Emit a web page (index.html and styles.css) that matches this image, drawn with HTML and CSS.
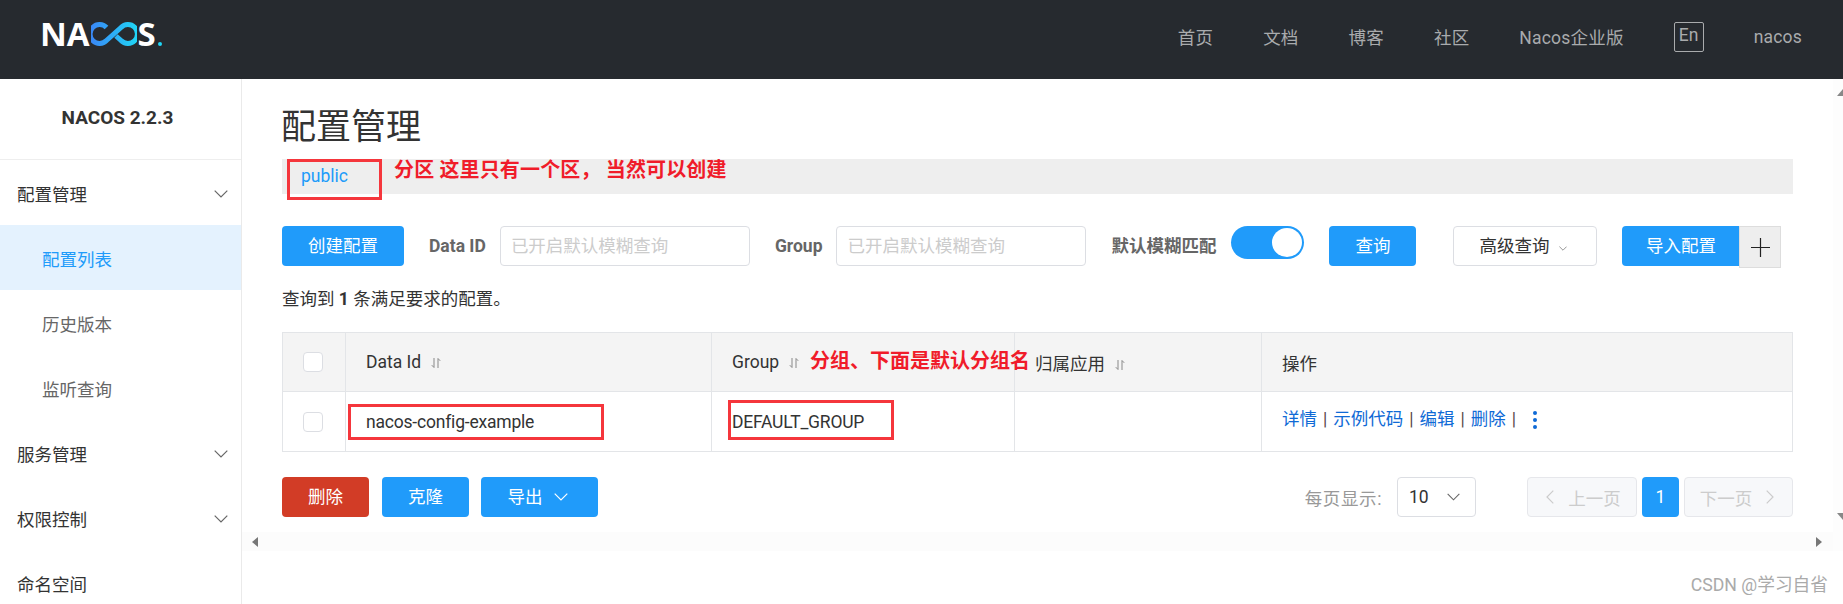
FILE: index.html
```html
<!DOCTYPE html>
<html lang="zh-CN">
<head>
    <meta charset="UTF-8">
    <meta name="viewport" content="width=device-width, initial-scale=1.0">
    <title>Nacos</title>
    <link rel="stylesheet" href="styles.css">
</head>
<body>
    <svg class="defs" width="0" height="0">
        <defs>
            <linearGradient id="loopGrad" x1="0" y1="0" x2="1" y2="0">
                <stop offset="0" stop-color="#3a86f6"/>
                <stop offset="1" stop-color="#1fd6f6"/>
            </linearGradient>
            <symbol id="sort" viewBox="0 0 10 10">
                <path d="M3 0V9.5M0.8 7.2L3 9.5M7 10V0.5M7 0.5L9.2 2.8" fill="none" stroke="currentColor" stroke-width="1"/>
            </symbol>
            <symbol id="chev" viewBox="0 0 14 8">
                <path d="M0.7 0.7L7 7L13.3 0.7" fill="none" stroke="currentColor" stroke-width="1.2"/>
            </symbol>
        </defs>
    </svg>

    <header class="topbar">
        <div class="logo">
            <span class="logo-text">NA</span>
            <svg class="logo-loop" width="46" height="24" viewBox="0 0 46 24">
                <path d="M15.5 5.5A9.5 9.5 0 1 0 15.5 18.5L30 5.5A9.5 9.5 0 1 1 30 18.5L25 14" fill="none" stroke="url(#loopGrad)" stroke-width="5"/>
            </svg>
            <span class="logo-text">S</span><span class="logo-dot"></span>
        </div>
        <nav class="topnav">
            <a>首页</a>
            <a>文档</a>
            <a>博客</a>
            <a>社区</a>
            <a>Nacos企业版</a>
            <a class="lang">En</a>
            <a>nacos</a>
        </nav>
    </header>

    <div class="main">
        <aside class="sidebar">
            <div class="version">NACOS 2.2.3</div>
            <ul class="menu">
                <li class="menu-item">配置管理<svg class="chev-side"><use href="#chev"/></svg></li>
                <li class="menu-sub active">配置列表</li>
                <li class="menu-sub">历史版本</li>
                <li class="menu-sub">监听查询</li>
                <li class="menu-item">服务管理<svg class="chev-side"><use href="#chev"/></svg></li>
                <li class="menu-item">权限控制<svg class="chev-side"><use href="#chev"/></svg></li>
                <li class="menu-item">命名空间</li>
            </ul>
        </aside>

        <section class="content">
            <h1 class="page-title">配置管理</h1>
            <div class="ns-bar"><a class="ns-link">public</a></div>

            <div class="toolbar">
                <button class="btn btn-create">创建配置</button>
                <label class="field-label label-id">Data ID</label>
                <input class="field" placeholder="已开启默认模糊查询">
                <label class="field-label label-group">Group</label>
                <input class="field" placeholder="已开启默认模糊查询">
                <label class="field-label label-fuzzy">默认模糊匹配</label>
                <span class="toggle"><span class="toggle-knob"></span></span>
                <button class="btn btn-query">查询</button>
                <button class="btn-plain">高级查询<svg class="chev-mini"><use href="#chev"/></svg></button>
                <button class="btn btn-import">导入配置</button>
                <span class="plus-box">
                    <svg width="19" height="19" viewBox="0 0 19 19"><path d="M0 9.5H19M9.5 0V19" stroke="#222" stroke-width="1.2"/></svg>
                </span>
            </div>

            <p class="result-count">查询到 <b>1</b> 条满足要求的配置。</p>

            <table class="config-table">
                <colgroup>
                    <col class="col-check"><col class="col-id"><col class="col-group"><col class="col-app"><col>
                </colgroup>
                <thead>
                    <tr>
                        <th><span class="check"></span></th>
                        <th>Data Id<svg class="sort"><use href="#sort"/></svg></th>
                        <th>Group<svg class="sort"><use href="#sort"/></svg></th>
                        <th>归属应用<svg class="sort"><use href="#sort"/></svg></th>
                        <th>操作</th>
                    </tr>
                </thead>
                <tbody>
                    <tr>
                        <td><span class="check"></span></td>
                        <td class="cell-text">nacos-config-example</td>
                        <td class="cell-text">DEFAULT_GROUP</td>
                        <td></td>
                        <td class="ops">
                            <a>详情</a><i>|</i><a>示例代码</a><i>|</i><a>编辑</a><i>|</i><a>删除</a><i>|</i>
                            <span class="more"><b></b><b></b><b></b></span>
                        </td>
                    </tr>
                </tbody>
            </table>

            <div class="table-foot">
                <button class="btn btn-danger">删除</button>
                <button class="btn btn-clone">克隆</button>
                <button class="btn btn-export">导出<svg class="chev-export"><use href="#chev"/></svg></button>
                <div class="pager">
                    <span class="pager-label">每页显示:</span>
                    <span class="page-size">10<svg class="chev-size"><use href="#chev"/></svg></span>
                    <span class="page-btn page-prev"><svg class="chev-left"><use href="#chev"/></svg>上一页</span>
                    <span class="page-num">1</span>
                    <span class="page-btn page-next">下一页<svg class="chev-right"><use href="#chev"/></svg></span>
                </div>
            </div>

            <div class="hscroll">
                <span class="arrow-left"></span>
                <span class="arrow-right"></span>
            </div>

            <!-- red marks drawn over the screenshot -->
            <div class="mark mark-public"></div>
            <div class="note note-public">分区 这里只有一个区， 当然可以创建</div>
            <div class="note note-group">分组、下面是默认分组名</div>
            <div class="mark mark-id"></div>
            <div class="mark mark-group"></div>
        </section>

        <div class="vscroll">
            <span class="arrow-up"></span>
            <span class="arrow-down"></span>
        </div>
    </div>

    <div class="watermark">CSDN @学习自省</div>
</body>
</html>
```

FILE: styles.css
```css
:root {
    --blue: #209bfa;
    --line: #e3e5e8;
    --font: Roboto, "Noto Sans CJK SC", sans-serif;
}
* {
    box-sizing: border-box;
}
html, body {
    margin: 0;
    height: 604px;
    overflow: hidden;
}
body {
    font-family: var(--font);
    font-size: 17.5px;
    color: #333;
    background-color: #fff;
    position: relative;
}
button, input {
    font-family: var(--font);
    font-size: 17.5px;
}
.defs {
    position: absolute;
}

/* top bar */
.topbar {
    height: 79px;
    background-color: #262a2f;
    display: flex;
    align-items: center;
    justify-content: space-between;
    padding: 0 41px 0 40px;
}
.logo {
    display: flex;
    align-items: center;
    height: 24px;
    margin-top: -11px;
    color: #fff;
}
.logo-text {
    font-family: "Open Sans", sans-serif;
    font-size: 33px;
    font-weight: 700;
    line-height: 24px;
}
.logo-loop {
    margin: 0 1px;
}
.logo-dot {
    width: 4px;
    height: 4px;
    border-radius: 50%;
    background-color: #1fd6f6;
    margin: 20px 0 0 2px;
}
.topnav {
    display: flex;
    align-items: center;
    gap: 50px;
    color: #a9abad;
    margin-top: -6px;
    letter-spacing: 0.2px;
}
.lang {
    width: 30px;
    height: 30px;
    border: 1px solid #a9abad;
    border-radius: 2px;
    text-align: center;
    line-height: 24px;
}

/* layout */
.main {
    display: flex;
    height: 525px;
}
.sidebar {
    width: 242px;
    flex-shrink: 0;
    border-right: 1px solid #eaeaea;
}
.version {
    height: 81px;
    line-height: 78px;
    text-align: center;
    font-size: 19px;
    font-weight: 700;
    padding-right: 6px;
    border-bottom: 1px solid #eee;
}
.menu {
    list-style: none;
    margin: 0;
    padding: 0;
}
.menu-item, .menu-sub {
    height: 65px;
    display: flex;
    align-items: center;
    justify-content: space-between;
    padding: 2px 13px 0 17px;
}
.menu-sub {
    padding-left: 42px;
    color: #666;
}
.menu-sub.active {
    color: var(--blue);
    background-color: #e4f2fe;
}
.chev-side {
    width: 14px;
    height: 8px;
    color: #666;
}

/* content */
.content {
    flex: 1;
    padding: 0 40px;
    position: relative;
    min-width: 0;
}
.page-title {
    margin: 0 0 0 -1px;
    height: 80px;
    padding-top: 28px;
    font-size: 35px;
    font-weight: 400;
    line-height: 42px;
}
.ns-bar {
    height: 35px;
    line-height: 35px;
    padding-left: 19px;
    background-color: #eee;
}
.ns-link {
    color: var(--blue);
}
.toolbar {
    display: flex;
    align-items: flex-start;
    margin-top: 32px;
}
.btn {
    height: 40px;
    border: none;
    border-radius: 4px;
    color: #fff;
    background-color: var(--blue);
    padding: 0 0 3px;
    flex-shrink: 0;
}
.btn-create {
    width: 122px;
}
.field-label {
    line-height: 40px;
    font-weight: 700;
    color: #666;
    white-space: nowrap;
}
.label-id {
    margin: 0 14px 0 25px;
}
.label-group {
    margin: 0 14px 0 25px;
}
.label-fuzzy {
    margin: 0 15px 0 25px;
}
.field {
    width: 250px;
    height: 40px;
    border: 1px solid #dcdee3;
    border-radius: 4px;
    padding: 0 10px;
    flex-shrink: 0;
}
.field::placeholder {
    color: #ccc;
}
.toggle {
    width: 73px;
    height: 33px;
    border-radius: 17px;
    background-color: var(--blue);
    display: flex;
    justify-content: flex-end;
    align-items: center;
    padding-right: 2px;
    flex-shrink: 0;
}
.toggle-knob {
    width: 30px;
    height: 29px;
    border-radius: 50%;
    background-color: #fff;
}
.btn-query {
    width: 87px;
    margin-left: 25px;
}
.btn-plain {
    width: 144px;
    height: 40px;
    margin-left: 37px;
    background-color: #fff;
    border: 1px solid #dcdee3;
    border-radius: 4px;
    color: #333;
    padding: 0 0 4px 25px;
    text-align: left;
    flex-shrink: 0;
}
.chev-mini {
    width: 8px;
    height: 5px;
    margin: 4px 0 0 10px;
    vertical-align: middle;
    color: #666;
}
.btn-import {
    width: 117px;
    margin-left: 25px;
    border-radius: 4px 0 0 4px;
}
.plus-box {
    width: 42px;
    height: 42px;
    background-color: #eee;
    border: 1px solid #ddd;
    display: flex;
    align-items: center;
    justify-content: center;
    flex-shrink: 0;
}
.result-count {
    margin: 0;
    height: 64px;
    line-height: 62px;
}

/* table */
.config-table {
    width: 100%;
    table-layout: fixed;
    border-collapse: collapse;
    border: 1px solid var(--line);
}
.col-check {
    width: 63px;
}
.col-id {
    width: 366px;
}
.col-group {
    width: 303px;
}
.col-app {
    width: 247px;
}
.config-table th, .config-table td {
    border: 1px solid var(--line);
    padding: 0 0 0 20px;
    text-align: left;
    font-weight: 400;
}
.config-table th {
    height: 59px;
    background-color: #f4f4f4;
}
.config-table td {
    height: 60px;
}
.config-table td.ops {
    padding-bottom: 5px;
    color: #0f6ad6;
    line-height: 20px;
}
.cell-text {
    letter-spacing: -0.2px;
}
.check {
    display: block;
    width: 20px;
    height: 20px;
    border: 1px solid #dcdee3;
    border-radius: 4px;
    background-color: #fff;
}
.sort {
    width: 10px;
    height: 10px;
    margin-left: 10px;
    color: #888;
}
.ops i {
    font-style: normal;
    color: #5a4a4a;
    margin: 0 6px;
}
.more {
    display: inline-flex;
    flex-direction: column;
    gap: 3px;
    margin-left: 7px;
    vertical-align: middle;
}
.more b {
    width: 4px;
    height: 4px;
    border-radius: 50%;
    background-color: #0f6ad6;
}

/* footer of the table */
.table-foot {
    display: flex;
    align-items: center;
    margin-top: 25px;
}
.btn-danger {
    width: 87px;
    background-color: #d23c26;
}
.btn-clone {
    width: 87px;
    margin-left: 13px;
}
.btn-export {
    width: 117px;
    margin-left: 12px;
    padding-right: 4px;
}
.chev-export {
    width: 14px;
    height: 8px;
    margin-left: 11px;
    vertical-align: 2px;
}
.pager {
    margin-left: auto;
    display: flex;
    align-items: center;
}
.pager-label {
    color: #999;
    margin-right: 15px;
    letter-spacing: 0.6px;
}
.page-size {
    width: 79px;
    height: 40px;
    border: 1px solid #dcdee3;
    border-radius: 4px;
    display: flex;
    align-items: center;
    justify-content: space-between;
    padding: 0 15px 0 11px;
    margin-right: 51px;
}
.chev-size {
    width: 13px;
    height: 8px;
    color: #666;
}
.page-btn {
    height: 40px;
    width: 110px;
    border: 1px solid #e6e7eb;
    border-radius: 4px;
    background-color: #f7f8fa;
    color: #ccc;
    display: flex;
    align-items: center;
    justify-content: center;
}
.page-next {
    width: 109px;
}
.chev-left, .chev-right {
    width: 14px;
    height: 8px;
    color: #ccc;
}
.chev-left {
    transform: rotate(90deg);
    margin-right: 11px;
}
.chev-right {
    transform: rotate(-90deg);
    margin-left: 11px;
}
.page-num {
    width: 37px;
    height: 40px;
    margin: 0 5px;
    border-radius: 4px;
    background-color: var(--blue);
    color: #fff;
    text-align: center;
    line-height: 40px;
}

/* scrollbars */
.hscroll {
    height: 19px;
    margin: 15px -40px 0;
    background-color: #fcfcfc;
    display: flex;
    align-items: center;
    justify-content: space-between;
    padding: 0 11px 0 10px;
}
.arrow-left {
    border: 5px solid transparent;
    border-left-width: 0;
    border-right: 6px solid #777;
}
.arrow-right {
    border: 5px solid transparent;
    border-right-width: 0;
    border-left: 6px solid #777;
}
.vscroll {
    width: 10px;
    height: 472px;
    background-color: #fdfdfd;
    display: flex;
    flex-direction: column;
    justify-content: space-between;
    padding: 10px 0 31px;
    overflow: hidden;
}
.arrow-up, .arrow-down {
    display: block;
    width: 0;
    margin-left: 4px;
    border: 6px solid transparent;
}
.arrow-up {
    border-top-width: 0;
    border-bottom: 7px solid #888;
}
.arrow-down {
    border-bottom-width: 0;
    border-top: 7px solid #888;
}

/* annotations */
.mark {
    position: absolute;
    border: 3px solid #f5363c;
}
.mark-public {
    left: 45px;
    top: 80px;
    width: 95px;
    height: 41px;
}
.mark-id {
    left: 106px;
    top: 325px;
    width: 256px;
    height: 36px;
}
.mark-group {
    left: 486px;
    top: 321px;
    width: 166px;
    height: 40px;
}
.note {
    position: absolute;
    color: #f01c2a;
    font-size: 20px;
    font-weight: 700;
    line-height: 24px;
    white-space: nowrap;
}
.note-public {
    left: 152px;
    top: 79px;
    letter-spacing: 0.15px;
}
.note-group {
    left: 568px;
    top: 270px;
}
.watermark {
    position: absolute;
    right: 15px;
    bottom: 9px;
    color: #aaa;
    font-size: 17.7px;
    line-height: 20px;
}
```
